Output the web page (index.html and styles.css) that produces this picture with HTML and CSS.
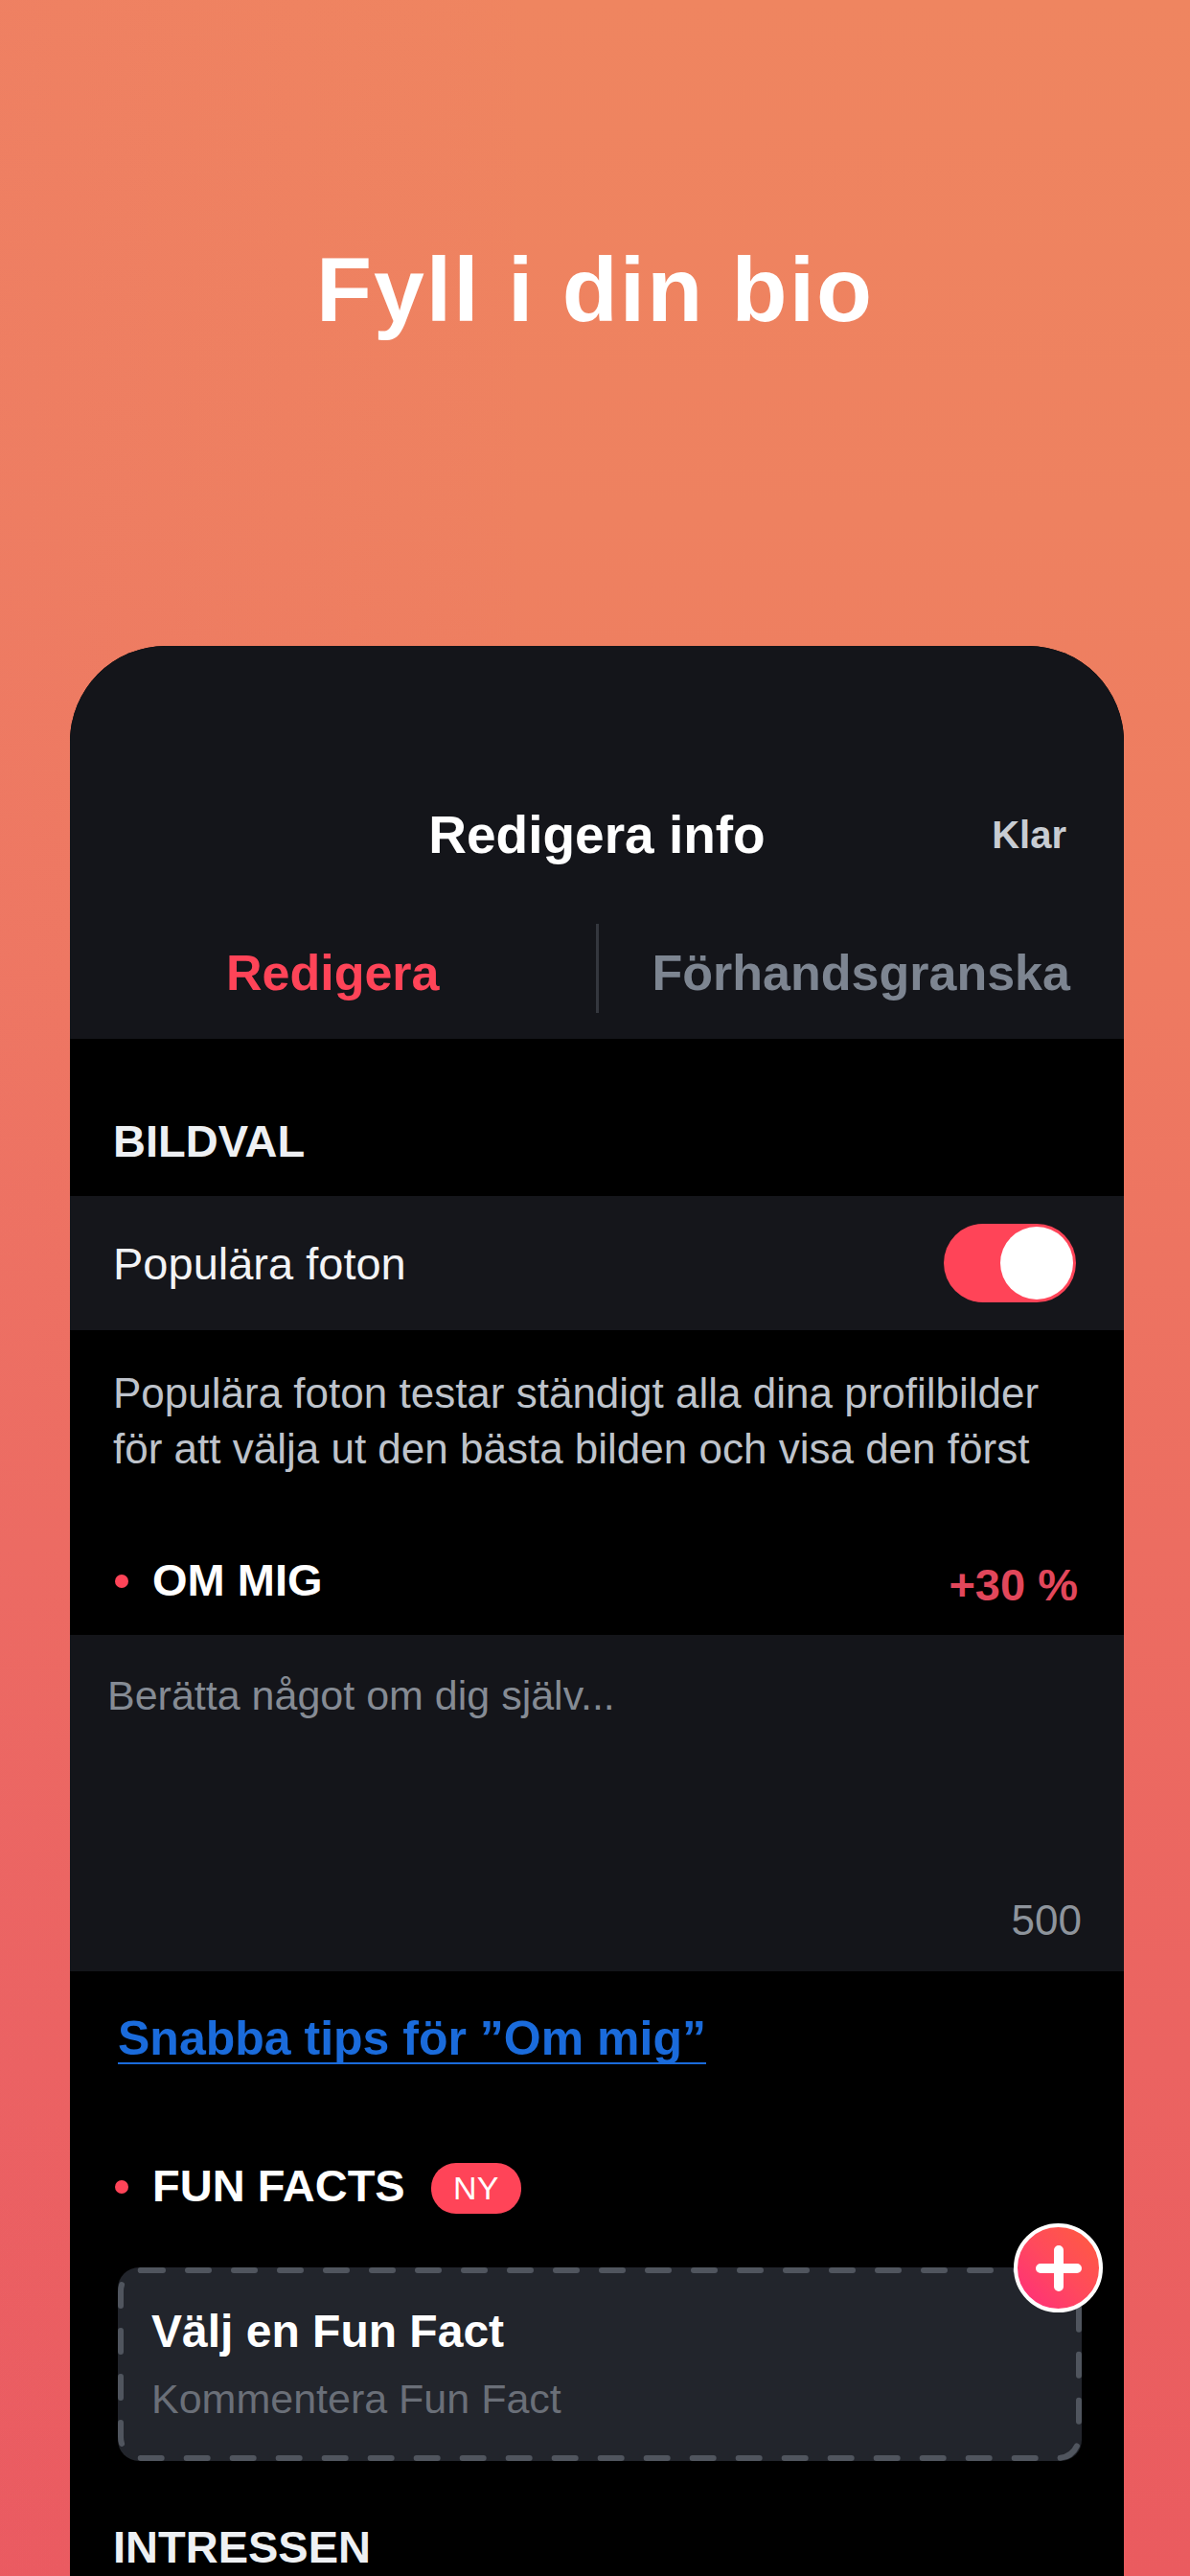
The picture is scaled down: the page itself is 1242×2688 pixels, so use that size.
FILE: index.html
```html
<!DOCTYPE html>
<html lang="sv">
<head>
<meta charset="utf-8">
<title>Fyll i din bio</title>
<link rel="stylesheet" href="styles.css">
</head>
<body>
<div class="page">
  <header class="hero">
    <h1 class="hero-title">Fyll i din bio</h1>
  </header>
  <main class="phone">
    <div class="nav">
      <div class="nav-bar">
        <span class="nav-title">Redigera info</span>
        <span class="nav-done">Klar</span>
      </div>
      <div class="tabs">
        <div class="tab tab-active">Redigera</div>
        <div class="tab-divider"></div>
        <div class="tab">Förhandsgranska</div>
      </div>
    </div>
    <div class="content">
      <div class="section-head section-bildval">BILDVAL</div>
      <div class="row">
        <span class="row-label">Populära foton</span>
        <span class="toggle"><span class="knob"></span></span>
      </div>
      <p class="desc">Populära foton testar ständigt alla dina profilbilder för att välja ut den bästa bilden och visa den först</p>
      <div class="section-head section-om">
        <span class="dot"></span>
        <span class="head-text">OM MIG</span>
        <span class="percent">+30 %</span>
      </div>
      <div class="bio-box">
        <span class="placeholder">Berätta något om dig själv...</span>
        <span class="counter">500</span>
      </div>
      <div class="tips"><a class="tips-link">Snabba tips för ”Om mig”</a></div>
      <div class="fun-head">
        <span class="dot"></span>
        <span class="head-text">FUN FACTS</span>
        <span class="badge">NY</span>
      </div>
      <div class="card">
        <svg class="card-dash" viewBox="0 0 1006 202" width="1006" height="202" aria-hidden="true">
          <rect x="3" y="3" width="1000" height="196" rx="22" ry="22" fill="none" stroke="#50555e" stroke-width="6" stroke-linecap="round" stroke-dasharray="22 26"/>
        </svg>
        <div class="card-title">Välj en Fun Fact</div>
        <div class="card-sub">Kommentera Fun Fact</div>
        <span class="plus">
          <svg viewBox="0 0 48 48" width="48" height="48" aria-hidden="true">
            <path d="M24 5 V43 M5 24 H43" stroke="#fff" stroke-width="10" stroke-linecap="round" fill="none"/>
          </svg>
        </span>
      </div>
      <div class="section-head section-intressen">INTRESSEN</div>
    </div>
  </main>
</div>
</body>
</html>
```

FILE: styles.css
```css
* { box-sizing: border-box; }

html, body {
  margin: 0;
  padding: 0;
}

body {
  width: 1242px;
  height: 2688px;
  overflow: hidden;
  font-family: "Liberation Sans", Arial, sans-serif;
  background:
    linear-gradient(90deg, rgba(236, 88, 118, 0.10) 0%, rgba(236, 88, 118, 0) 45%),
    linear-gradient(180deg, #ef8560 0%, #ee8160 20%, #ee7a61 38%, #ec6d61 60%, #eb6361 80%, #ea5b5f 100%);
}

.page {
  display: flex;
  flex-direction: column;
  height: 2688px;
}

.hero {
  height: 674px;
  padding-top: 255px;
  flex: none;
}

.hero-title {
  margin: 0;
  text-align: center;
  color: #ffffff;
  font-size: 95px;
  line-height: 95px;
  font-weight: 700;
  letter-spacing: 2px;
}

.phone {
  flex: 1;
  margin: 0 69px 0 73px;
  background: #000000;
  border-radius: 100px 100px 0 0;
  overflow: hidden;
  display: flex;
  flex-direction: column;
}

.nav {
  background: #14151a;
  padding: 147px 0 19px;
  height: 410px;
  flex: none;
}

.nav-bar {
  height: 100px;
  position: relative;
  display: flex;
  align-items: center;
  justify-content: center;
}

.nav-title {
  color: #ffffff;
  font-size: 55px;
  line-height: 55px;
  font-weight: 700;
}

.nav-done {
  position: absolute;
  right: 60px;
  top: 30px;
  color: #c8ccd2;
  font-size: 40px;
  line-height: 40px;
  font-weight: 700;
}

.tabs {
  margin-top: 43px;
  height: 101px;
  display: flex;
  align-items: center;
}

.tab {
  flex: 1;
  text-align: center;
  font-size: 52px;
  line-height: 52px;
  font-weight: 700;
  color: #7d8591;
}

.tab-active {
  color: #ff4458;
}

.tab-divider {
  width: 3px;
  height: 93px;
  align-self: flex-start;
  background: #34373e;
}

.content {
  flex: 1;
  display: flex;
  flex-direction: column;
  background: #000000;
}

.section-head {
  display: flex;
  align-items: center;
  color: #eef0f3;
  font-size: 47px;
  line-height: 47px;
  font-weight: 700;
}

.section-bildval {
  padding: 83px 45px 34px;
}

.row {
  height: 140px;
  background: #15161b;
  display: flex;
  align-items: center;
  justify-content: space-between;
  padding: 0 50px 0 45px;
}

.row-label {
  color: #f2f3f5;
  font-size: 47px;
  line-height: 47px;
}

.toggle {
  width: 138px;
  height: 82px;
  border-radius: 41px;
  background: #ff4458;
  display: flex;
  justify-content: flex-end;
  align-items: center;
  padding: 3px;
}

.knob {
  width: 76px;
  height: 76px;
  border-radius: 50%;
  background: #ffffff;
}

.desc {
  margin: 0;
  padding: 37px 48px 0 45px;
  color: #bec3cb;
  font-size: 44px;
  line-height: 58px;
}

.section-om {
  align-items: flex-start;
  padding: 84px 48px 29px 47px;
  color: #ffffff;
}

.section-om .dot {
  margin-top: 18px;
}

.dot {
  width: 14px;
  height: 14px;
  border-radius: 50%;
  background: #ff4458;
  flex: none;
  margin-right: 25px;
}

.head-text {
  color: #ffffff;
}

.percent {
  margin-left: auto;
  margin-top: 5px;
  color: #e2475b;
  font-weight: 700;
}

.bio-box {
  height: 351px;
  background: #14151a;
  display: flex;
  flex-direction: column;
  justify-content: space-between;
  padding: 42px 44px 31px 39px;
}

.placeholder {
  color: #858b94;
  font-size: 43px;
  line-height: 43px;
}

.counter {
  align-self: flex-end;
  color: #8e949c;
  font-size: 44px;
  line-height: 44px;
}

.tips {
  margin-top: 45px;
  padding-left: 50px;
}

.tips-link {
  display: inline-block;
  color: #1a6bdb;
  font-size: 50px;
  line-height: 50px;
  font-weight: 700;
  border-bottom: 2px solid #1a6bdb;
  height: 52px;
}

.fun-head {
  margin-top: 100px;
  height: 53px;
  display: flex;
  align-items: center;
  padding-left: 47px;
  font-size: 47px;
  line-height: 47px;
  font-weight: 700;
}

.fun-head .dot {
  margin-top: 3px;
}

.badge {
  margin-left: 27px;
  margin-top: 5px;
  width: 94px;
  height: 53px;
  border-radius: 26px;
  background: #ff4458;
  color: #ffffff;
  font-size: 34px;
  line-height: 53px;
  font-weight: 400;
  text-align: center;
}

.card {
  position: relative;
  margin: 59px 0 0 50px;
  width: 1006px;
  height: 202px;
  border-radius: 22px;
  background: #22252c;
  padding: 43px 34px 0 35px;
}

.card-dash {
  position: absolute;
  left: 0;
  top: 0;
}

.card-title {
  position: relative;
  color: #ffffff;
  font-size: 48px;
  line-height: 48px;
  font-weight: 700;
}

.card-sub {
  position: relative;
  margin-top: 25px;
  color: #6a6f78;
  font-size: 43px;
  line-height: 43px;
}

.plus {
  position: absolute;
  top: -46px;
  right: -22px;
  width: 93px;
  height: 93px;
  border-radius: 50%;
  border: 4px solid #ffffff;
  background: linear-gradient(45deg, #ff2c7d 0%, #ff4a5c 50%, #ff5d3f 100%);
  display: flex;
  align-items: center;
  justify-content: center;
}

.section-intressen {
  padding: 66px 45px 0;
}
```
